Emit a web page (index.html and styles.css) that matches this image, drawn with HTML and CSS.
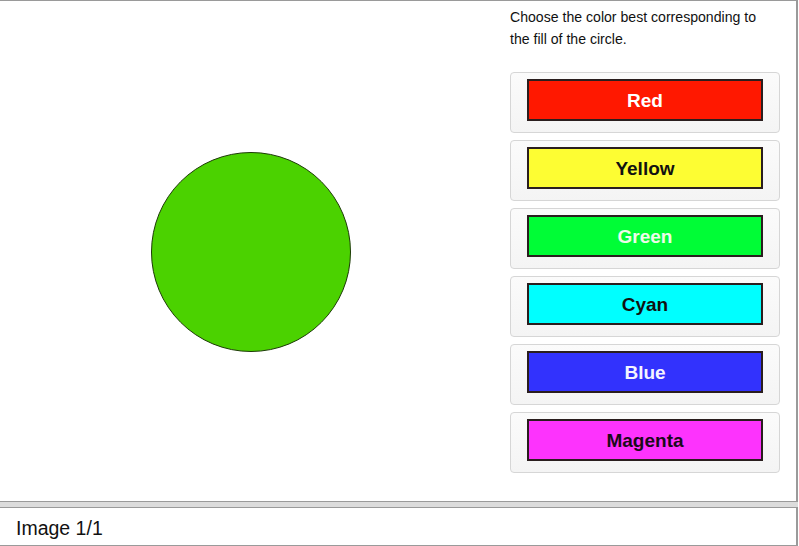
FILE: index.html
```html
<!DOCTYPE html>
<html>
<head>
<meta charset="utf-8">
<link rel="stylesheet" href="styles.css">
</head>
<body>
<div class="app">
  <div class="main">
    <div class="stage">
      <div class="circle"></div>
    </div>
    <div class="side">
      <p class="prompt">Choose the color best corresponding to the fill of the circle.</p>
      <div class="choices">
        <div class="card"><div class="swatch red">Red</div></div>
        <div class="card"><div class="swatch yellow">Yellow</div></div>
        <div class="card"><div class="swatch green">Green</div></div>
        <div class="card"><div class="swatch cyan">Cyan</div></div>
        <div class="card"><div class="swatch blue">Blue</div></div>
        <div class="card"><div class="swatch magenta">Magenta</div></div>
      </div>
    </div>
  </div>
  <div class="divider"></div>
  <div class="footer">Image 1/1</div>
</div>
</body>
</html>
```
FILE: styles.css
```css
html, body {
  margin: 0;
  padding: 0;
  background: #fff;
  font-family: "Liberation Sans", Arial, sans-serif;
}
.app {
  width: 798px;
}
.main {
  box-sizing: border-box;
  height: 502px;
  border-top: 1px solid #9a9a9a;
  border-bottom: 1px solid #9a9a9a;
  border-right: 2px solid #9a9a9a;
  display: flex;
}
.stage {
  width: 502px;
  display: flex;
  align-items: center;
  justify-content: center;
}
.circle {
  box-sizing: border-box;
  width: 200px;
  height: 200px;
  margin-top: 2px;
  border-radius: 50%;
  background: #4bd200;
  border: 1px solid #1c3a06;
}
.side {
  width: 270px;
  margin-left: 8px;
  padding-top: 5px;
}
.prompt {
  margin: 0;
  width: 256px;
  font-size: 14.1px;
  line-height: 22px;
  color: #111;
}
.choices {
  margin-top: 22px;
  display: flex;
  flex-direction: column;
  gap: 7px;
}
.card {
  box-sizing: border-box;
  height: 61px;
  padding: 6px 16px 11px;
  border: 1px solid #d6d6d6;
  border-radius: 4px;
  background: linear-gradient(#fbfbfb, #f4f4f4);
}
.swatch {
  box-sizing: border-box;
  height: 42px;
  padding-top: 2px;
  border: 2px solid #2a1e1e;
  display: flex;
  align-items: center;
  justify-content: center;
  font-weight: bold;
  font-size: 19px;
}
.red { background: #ff1800; color: #fff; }
.yellow { background: #fdfd33; color: #111; }
.green { background: #00fd36; color: #eefbe9; }
.cyan { background: #00ffff; color: #111; }
.blue { background: #3232fd; color: #f4f4ff; }
.magenta { background: #fd33fd; color: #1a0a1a; }
.divider {
  height: 5px;
  background: #dcdcdc;
}
.footer {
  box-sizing: border-box;
  height: 39px;
  border-top: 1px solid #9a9a9a;
  border-bottom: 1px solid #9a9a9a;
  border-right: 2px solid #9a9a9a;
  padding-left: 16px;
  padding-top: 3px;
  font-size: 19.5px;
  line-height: 34px;
  color: #111;
}
```
